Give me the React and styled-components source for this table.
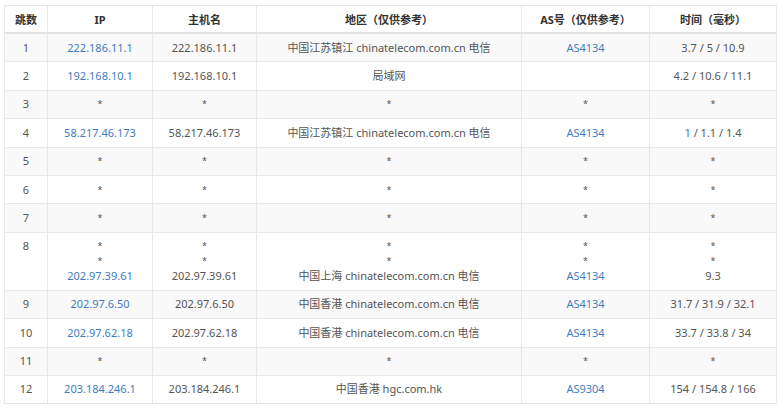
import React from 'react'
import styled, { createGlobalStyle } from 'styled-components'

const GlobalStyle = createGlobalStyle`
  body {
    margin: 0;
    background: #fff;
    font-family: 'Noto Sans', 'Noto Sans CJK SC', sans-serif;
  }
`

const rows = [
  { hop: 1, ip: '222.186.11.1', host: '222.186.11.1', area: '中国江苏镇江 chinatelecom.com.cn 电信', as: 'AS4134', time: '3.7 / 5 / 10.9' },
  { hop: 2, ip: '192.168.10.1', host: '192.168.10.1', area: '局域网', as: '', time: '4.2 / 10.6 / 11.1' },
  { hop: 3, star: true },
  { hop: 4, ip: '58.217.46.173', host: '58.217.46.173', area: '中国江苏镇江 chinatelecom.com.cn 电信', as: 'AS4134', time: '1 / 1.1 / 1.4', blueFirst: true },
  { hop: 5, star: true },
  { hop: 6, star: true },
  { hop: 7, star: true },
  { hop: 8, lead: 2, ip: '202.97.39.61', host: '202.97.39.61', area: '中国上海 chinatelecom.com.cn 电信', as: 'AS4134', time: '9.3' },
  { hop: 9, ip: '202.97.6.50', host: '202.97.6.50', area: '中国香港 chinatelecom.com.cn 电信', as: 'AS4134', time: '31.7 / 31.9 / 32.1' },
  { hop: 10, ip: '202.97.62.18', host: '202.97.62.18', area: '中国香港 chinatelecom.com.cn 电信', as: 'AS4134', time: '33.7 / 33.8 / 34' },
  { hop: 11, star: true },
  { hop: 12, ip: '203.184.246.1', host: '203.184.246.1', area: '中国香港 hgc.com.hk', as: 'AS9304', time: '154 / 154.8 / 166' },
]

const widths = [43, 105, 104, 265, 128, 127]

function Cell({ lead, children, link }) {
  return (
    <Td>
      {Array.from({ length: lead || 0 }).map((_, i) => (
        <Star key={i}>*</Star>
      ))}
      {link ? <Link>{children}</Link> : children}
    </Td>
  )
}

function TimeText({ row }) {
  if (!row.blueFirst) return row.time
  const [first, ...rest] = row.time.split(' / ')
  return (
    <>
      <Link>{first}</Link> / {rest.join(' / ')}
    </>
  )
}

export default function App() {
  return (
    <Wrap>
      <GlobalStyle />
      <Table>
        <colgroup>
          {widths.map((w, i) => (
            <col key={i} style={{ width: w }} />
          ))}
        </colgroup>
        <thead>
          <tr>
            <Th>跳数</Th>
            <Th>IP</Th>
            <Th>主机名</Th>
            <Th>地区（仅供参考）</Th>
            <Th>AS号（仅供参考）</Th>
            <Th>时间（毫秒）</Th>
          </tr>
        </thead>
        <tbody>
          {rows.map((r) =>
            r.star ? (
              <Tr key={r.hop}>
                <Td>{r.hop}</Td>
                <Td><Star>*</Star></Td>
                <Td><Star>*</Star></Td>
                <Td><Star>*</Star></Td>
                <Td><Star>*</Star></Td>
                <Td><Star>*</Star></Td>
              </Tr>
            ) : (
              <Tr key={r.hop}>
                <Td>{r.hop}</Td>
                <Cell lead={r.lead} link>{r.ip}</Cell>
                <Cell lead={r.lead}>{r.host}</Cell>
                <Cell lead={r.lead}>{r.area}</Cell>
                <Cell lead={r.lead} link>{r.as}</Cell>
                <Cell lead={r.lead}><TimeText row={r} /></Cell>
              </Tr>
            )
          )}
        </tbody>
      </Table>
    </Wrap>
  )
}

const Wrap = styled.div`
  padding: 5px 4px;
`

const Table = styled.table`
  width: 772px;
  table-layout: fixed;
  border-collapse: collapse;
  border: 1px solid #e8e8e8;
  font-size: 11px;
  color: #555;
`

const Th = styled.th`
  height: 26px;
  padding: 0 4px;
  border: 1px solid #e8e8e8;
  border-bottom: 2px solid #e4e4e4;
  font-weight: bold;
  font-size: 11px;
  color: #333;
  text-align: center;
  vertical-align: middle;
`

const Tr = styled.tr`
  &:nth-child(odd) {
    background: #f9f9f9;
  }
`

const Td = styled.td`
  padding: 6.6px 4px 6px;
  line-height: 14.8px;
  border: 1px solid #e8e8e8;
  text-align: center;
  vertical-align: top;
  white-space: nowrap;
`

const Star = styled.div`
  font-size: 9px;
  color: #555;
`

const Link = styled.span`
  color: #3f7cbf;
`
